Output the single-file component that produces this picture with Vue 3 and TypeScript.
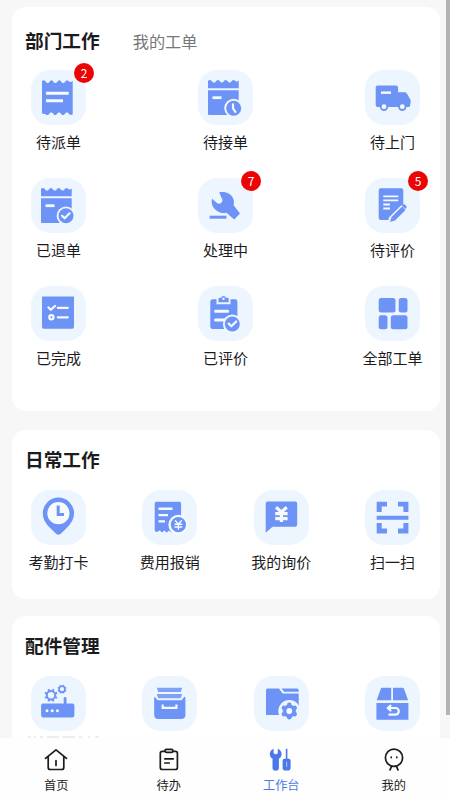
<script setup lang="ts">
interface Entry {
  label: string
  icon: string
  badge?: number
}

const check = '<path class="k" d="m31 37.8 2.6 2.5 5-5"/>'
const slip = (circle: string) =>
  `<path d="M10 18.3v-7.5q1.8-1.6 3.6 0c1.5 2.6 3.4 2.4 4.8 0q1.5-1.7 3 0c1.5 2.4 3.4 2.4 4.8 0q1.5-1.7 3 0c1.5 2.4 3.4 2.4 4.8 0q1.5-1.7 3 0l1.5 1 2.2-1.3v7.8z"/><path d="M10 20.2h30.7V45H11q-1 0-1-1z"/><path class="w" d="M14.5 26.3h9v2.8h-9z"/>${circle}`
const ringed = (x: number, y: number, inner: string) =>
  `<circle class="bg" cx="${x}" cy="${y}" r="9.4"/><circle cx="${x}" cy="${y}" r="7.5"/>${inner}`

function gear(cx: number, cy: number, r: number, teeth: number): string {
  let d = ''
  for (let i = 0; i < teeth; i++) {
    const a = ((i + 0.5) * 2 * Math.PI) / teeth
    const x1 = cx + r * Math.cos(a)
    const y1 = cy + r * Math.sin(a)
    const x2 = cx + r * 1.4 * Math.cos(a)
    const y2 = cy + r * 1.4 * Math.sin(a)
    d += `M${x1.toFixed(2)} ${y1.toFixed(2)}L${x2.toFixed(2)} ${y2.toFixed(2)}`
  }
  return d
}

const icons: Record<string, string> = {
  receipt:
    '<path d="M11 11.2q1.8-1.8 3.4 0c1.5 2.4 3.3 2.4 4.6 0q1.5-1.7 3 0c1.5 2.4 3.4 2.4 4.8 0q1.5-1.7 3 0c1.5 2.4 3.4 2.4 4.8 0q1.5-1.7 3 0 2 1.8 4.1-.4v33.4q-1.8 1.6-3.4 0c-1.5-2.4-3.4-2.4-4.8 0q-1.5 1.7-3 0c-1.5-2.4-3.4-2.4-4.8 0q-1.5 1.7-3 0c-1.5-2.4-3.4-2.4-4.8 0q-1.5 1.7-3 0L11 43.6z"/><path class="w" d="M15 21.8h22.7v3H15zM15 29.2h17v3H15z"/>',
  clock: slip(ringed(35.7, 38.2, '<path class="k" d="M35 34.4v4l2.4 3.4"/>')),
  returned: slip(ringed(35, 37.8, check)),
  truck:
    '<path d="M12.5 15.5h18.4q2.2 0 2.2 2v4.8h6.4q1.7 0 2.5 1.4l3.2 5.5q.7 1.2.5 2.4l-.6 3.8q-.2 1.6-2 1.6H12.6q-1.9 0-1.9-2V17.5q0-2 1.8-2z"/><circle cx="19" cy="36.7" r="4.2"/><circle cx="37.3" cy="36.7" r="4.2"/><circle class="w" cx="19" cy="36.7" r="2.4"/><circle class="w" cx="37.3" cy="36.7" r="2.4"/><path class="w" d="M16 21.4h10v2.5H16z"/>',
  wrench:
    '<path d="M21.2 14.3c6-1.4 12 1.3 14 6.2 1 2.5.9 4.7.4 6.8l6.4 8.2-5.8 5.9-7.7-6.7c-3.5.9-7 0-9.7-2-4.3-3.2-6-7.400-4.700-12l4.900 4.300c1.300 1.100 3.200.900 4.400-.300 1.300-1.300 1.400-3.200.300-4.500z"/><path d="M11.700 37.700H28.500v3H11.700z"/>',
  review:
    '<path d="M15.500 10.300h20.800q2 0 2 2v13.900L23.600 40v2h-7.900q-2 0-2-2V12.300q0-2 1.800-2z"/><path class="w" d="M18.300 17.400h15v1.900h-15zM18.300 21.400h15v1.900h-15zM18.300 25.500H25v1.900h-6.700zM18.300 29.500H25v1.900h-6.700z"/><path class="pengap" d="M39 30 27 42"/><path class="pen" d="M38.800 30.200 28 41"/><path d="m26.400 39.200 3.400 3.400-4.800 1.500z"/><path d="m36.800 27.700 1.200-1.100q.9-.8 1.800 0l1.500 1.500q.8.900 0 1.800l-1.100 1.100z"/>',
  done:
    '<path d="M11 10.400h32v30.400q0 2-2 2H13q-2 0-2-2z"/><path class="k" d="m17.500 21.400 2.300 2.400 4.200-3.800M26.800 21.800h10M26.800 31.300h10"/><circle class="k" cx="20.400" cy="31.300" r="2.100"/>',
  rated:
    '<path d="M14.800 13.300h3.700v5h14v-5H37q2.400 0 2.400 2.400v25q0 2.400-2.400 2.400H14.800q-2.500 0-2.500-2.500V15.800q0-2.500 2.500-2.500z"/><path d="M22 11.800h1.200a2.400 2.400 0 0 1 4.700 0h1.600q1.200 0 1.200 1.200v3.300H20.400v-3.100q0-1.400 1.600-1.400z"/><circle class="bg" cx="25.500" cy="12.800" r="1.200"/><path class="w" d="M17.500 23.800h12.200a1.500 1.500 0 0 1 0 3H17.500a1.500 1.500 0 0 1 0-3zM17.500 32.500h11v3h-11a1.500 1.500 0 0 1 0-3z"/>' +
    ringed(34.3, 38, '<path class="k" d="m30.700 37.600 2.700 2.700 4.800-4.800"/>'),
  grid:
    '<rect x="13.700" y="12" width="16.800" height="14.400" rx="2.500"/><rect x="33.700" y="12" width="8.800" height="14.400" rx="2.500"/><rect x="13.700" y="29.200" width="8.800" height="14" rx="2.500"/><rect x="25.800" y="29.200" width="16.700" height="14" rx="2.500"/>',
  pin:
    '<path d="M27.400 7.600A15.600 15.600 0 0 1 43 23.200c0 7.400-4.600 12-8.800 16.200l-4.800 4.600q-2 1.600-4 0l-4.800-4.600c-4.200-4.200-8.800-8.800-8.800-16.200A15.600 15.600 0 0 1 27.400 7.600z"/><circle class="w" cx="27.400" cy="23.200" r="11.100"/><path class="hands" d="M27.200 15.500v9.100H33"/>',
  expense:
    '<path d="M14.500 11.700h23q1.600 0 1.600 1.600V41l-2.500-.5-2.500 2-2.500-2-2.200 2-2.200-2-2.500 2-2.500-2-2 2-2.500-2-3 1.500q-2 0-2-2V13.300q0-1.600 1.800-1.600z"/><path class="w" d="M16.500 17.600h14v2.300h-14zM16.500 24h9.500v2.300h-9.500zM16.500 30.300h6.500v2.300h-6.500z"/><circle class="w" cx="36.400" cy="34.700" r="10"/><circle cx="36.400" cy="34.700" r="7.600"/><path class="k thin" d="m33.400 30.800 3 3.200 3-3.200M33 34.300h6.800M33 37h6.800M36.400 34v5.300"/>',
  price:
    '<path d="M13.700 11.400H41q2.200 0 2.200 2.200v20.900q0 2.200-2.200 2.200H18.500l-6.800 6V13.600q0-2.200 2-2.200z"/><path class="k yen" d="m22 17.200 5.400 4.800 5.400-4.800M21.200 23.600h12.400M21.200 28.600h12.400M27.400 22v10"/>',
  scan:
    '<path d="M11.700 11.700H22v4.800h-5.300V22h-5zM33 11.700h10.400V22h-5v-5.500H33zM11.700 33h5v5.600H22v4.800H11.700zM38.400 33h5v10.400H33v-4.800h5.400zM11.700 25.700h31.700v4H11.700z"/>',
  router:
    `<path d="M12 27.500h20.700v-5q0-1.400 1.400-1.400t1.400 1.400v5h6q1.900 0 1.900 1.900v9.800q0 2.300-2.300 2.300H12.400q-2.300 0-2.300-2.300v-9.800q0-1.900 1.900-1.900z"/><g class="w"><circle cx="16" cy="34.800" r="1.500"/><circle cx="21.200" cy="34.800" r="1.500"/><circle cx="26.400" cy="34.800" r="1.500"/></g><g class="o"><circle cx="20" cy="19.300" r="4.200"/><path d="${gear(20, 19.3, 4.7, 8)}"/></g><g class="o small"><circle cx="31" cy="13.200" r="2.900"/><path d="${gear(31, 13.2, 3.2, 8)}"/></g>`,
  drawer:
    '<path opacity=".85" d="M14.800 11.700h25.400l-1.400 4.200H16.200zM14.800 18h25.400l-1.400 4.200H16.200z"/><path d="M12.200 21.600q0-1 .8-.6l2.500 3.200h24l2.700-3.200q1-.5 1.200.6v17.500q0 4-4.400 4H16.500q-4.300 0-4.300-4z"/><path class="k square" d="M20.700 28.500v3.300h13.700v-3.300"/>',
  folder:
    `<path d="M13.600 12.600H25l3.500 4.800h16.200V39H12V14.200q0-1.600 1.600-1.600zM27.600 12.600h15.500q1.600 0 1.600 1.600v1.500H30z"/><circle class="bg" cx="35.300" cy="35" r="11"/><circle cx="35.300" cy="35" r="6.600"/><path class="teeth" d="${gear(35.3, 35, 4.4, 6)}"/><circle class="w" cx="35.300" cy="35" r="2.900"/>`,
  parcel:
    '<path d="M17.300 11.700h8.900v12.600H11.700l4-11.300q.4-1.300 1.600-1.300zM28 11.700h9.500q1.200 0 1.600 1.300l4 11.300H28zM11.400 27h32v16.700h-32z"/><path class="k" d="M24.300 38.600h6.200a3.300 3.300 0 0 0 0-6.600H23M25.500 29.700 22.700 32l2.800 2.500"/>',
}

const department: Entry[] = [
  { label: '待派单', icon: 'receipt', badge: 2 },
  { label: '待接单', icon: 'clock' },
  { label: '待上门', icon: 'truck' },
  { label: '已退单', icon: 'returned' },
  { label: '处理中', icon: 'wrench', badge: 7 },
  { label: '待评价', icon: 'review', badge: 5 },
  { label: '已完成', icon: 'done' },
  { label: '已评价', icon: 'rated' },
  { label: '全部工单', icon: 'grid' },
]
const daily: Entry[] = [
  { label: '考勤打卡', icon: 'pin' },
  { label: '费用报销', icon: 'expense' },
  { label: '我的询价', icon: 'price' },
  { label: '扫一扫', icon: 'scan' },
]
const parts: string[] = ['router', 'drawer', 'folder', 'parcel']

const tabs = [
  { label: '首页', icon: '<path d="M1.500 10.300 12 1.800l10.500 8.500M4.200 8.500v11q0 2 2 2h11.600q2 0 2-2v-11M12 12.500v5"/>' },
  { label: '待办', icon: '<path d="M8 3.300H5.300q-2 0-2 2v14.200q0 2 2 2h13.100q2 0 2-2V5.300q0-2-2-2H16M9.500 1.300h5q1.500 0 1.500 1.500t-1.500 1.500h-5Q8 4.300 8 2.800t1.500-1.500zM7.800 10.800h8.500M7.800 15h4.500"/>' },
  { label: '工作台', active: true, icon: '<path class="f" d="M4.600.7v4.500l2.100 1.300 2.100-1.300V.7c2.600 1.200 3.800 3 3.800 5.200 0 2.300-1.200 3.800-2.700 4.700v9a3.200 3.200 0 0 1-6.400 0v-9C2 9.700.8 8.200.8 5.900.8 3.700 2 1.900 4.600.7zM16.800.7h1.600v10.100h1.300q1.900 0 1.900 1.900v7.100q0 2.800-2.800 2.800h-2.400q-2.800 0-2.800-2.800v-7.100q0-1.900 1.900-1.900h1.300z"/><path class="slot" d="M17.600 14v4.500"/>' },
  { label: '我的', icon: '<circle cx="12" cy="9.800" r="8.600"/><path d="M9.500 18.600 8 21.800M14.500 18.600l1.500 3.200M9.200 9.200v.4M14.800 9.200v.4"/>' },
]
</script>

<template>
  <div class="screen">
    <main class="content">
      <section class="card department">
        <header class="head">
          <h2>部门工作</h2>
          <span class="other">我的工单</span>
        </header>
        <div class="grid three">
          <div v-for="e in department" :key="e.label" class="item">
            <div class="tile">
              <svg viewBox="0 0 55 55" v-html="icons[e.icon]"></svg>
              <b v-if="e.badge" class="badge">{{ e.badge }}</b>
            </div>
            <span class="label">{{ e.label }}</span>
          </div>
        </div>
      </section>
      <section class="card daily">
        <header class="head"><h2>日常工作</h2></header>
        <div class="grid four">
          <div v-for="e in daily" :key="e.label" class="item">
            <div class="tile"><svg viewBox="0 0 55 55" v-html="icons[e.icon]"></svg></div>
            <span class="label">{{ e.label }}</span>
          </div>
        </div>
      </section>
      <section class="card parts">
        <header class="head"><h2>配件管理</h2></header>
        <div class="grid four">
          <div v-for="p in parts" :key="p" class="item">
            <div class="tile"><svg viewBox="0 0 55 55" v-html="icons[p]"></svg></div>
          </div>
        </div>
        <svg class="hint" viewBox="0 0 72 2"><path d="M1 1h3m3 0h2m4 0h3m4 0h12m3 0h13m4 0h3m6 0h2m5 0h5" /></svg>
      </section>
    </main>
    <div class="scrollbar"></div>
    <nav class="tabs">
      <div v-for="t in tabs" :key="t.label" class="tab" :class="{ active: t.active }">
        <svg viewBox="0 0 24 24" v-html="t.icon"></svg>
        <span>{{ t.label }}</span>
      </div>
    </nav>
  </div>
</template>

<style>
body {
  margin: 0;
  overflow: hidden;
}
</style>

<style scoped>
.screen {
  position: relative;
  display: flex;
  flex-direction: column;
  width: 450px;
  height: 800px;
  overflow: hidden;
  background: #f7f7f7;
  color: #1c1c1e;
  font-family: "Noto Sans CJK SC", sans-serif;
}
.content {
  flex: 1;
  min-height: 0;
  display: flex;
  flex-direction: column;
  padding: 7px 10px 0 12px;
  overflow: hidden;
}
.card {
  box-sizing: border-box;
  flex: none;
  background: #fff;
  border-radius: 14px;
  padding: 18px 15.5px 0 13px;
}
.department {
  height: 404px;
  margin-bottom: 19px;
}
.daily {
  height: 169px;
  margin-bottom: 17px;
  padding-top: 14px;
}
.parts {
  height: 122px;
  padding-top: 14px;
  border-radius: 14px 14px 0 0;
}
.head {
  display: flex;
  align-items: center;
  height: 30px;
}
h2 {
  margin: 0;
  font-size: 18.7px;
  line-height: 30px;
  font-weight: 700;
}
.other {
  margin: 1px 0 0 33px;
  font-size: 16.2px;
  line-height: 28px;
  color: #777;
}
.grid {
  display: grid;
  justify-content: space-between;
  padding: 15px 0 0 1.5px;
}
.three {
  grid-template-columns: repeat(3, 64px);
}
.four {
  grid-template-columns: repeat(4, 64px);
  padding-top: 16px;
}
.item {
  display: flex;
  flex-direction: column;
  align-items: center;
  height: 108px;
}
.daily .item {
  height: 90px;
}
.parts .item {
  height: 60px;
}
.tile {
  position: relative;
  width: 55px;
  height: 55px;
  border-radius: 19px;
  background: #edf6ff;
}
.tile svg {
  display: block;
  width: 55px;
  height: 55px;
  fill: #6c93f5;
}
.tile :deep(.w) {
  fill: #f6fbff;
}
.tile :deep(.bg) {
  fill: #edf6ff;
}
.tile :deep(.k) {
  fill: none;
  stroke: #f6fbff;
  stroke-width: 2.2;
  stroke-linecap: round;
  stroke-linejoin: round;
}
.tile :deep(.thin) {
  stroke-width: 1.4;
}
.tile :deep(.yen) {
  stroke-width: 3.2;
  stroke-linecap: butt;
}
.tile :deep(.square) {
  stroke-linecap: butt;
  stroke-linejoin: miter;
}
.tile :deep(.hands) {
  fill: none;
  stroke: #6c93f5;
  stroke-width: 3;
}
.tile :deep(.pen) {
  stroke: #6c93f5;
  stroke-width: 4.8;
}
.tile :deep(.pengap) {
  stroke: #edf6ff;
  stroke-width: 8;
}
.tile :deep(.o) {
  fill: none;
  stroke: #6c93f5;
  stroke-width: 2;
}
.tile :deep(.small) {
  stroke-width: 1.6;
}
.tile :deep(.teeth) {
  stroke: #6c93f5;
  stroke-width: 4.6;
  stroke-linecap: round;
}
.label {
  margin-top: 6px;
  font-size: 15px;
  line-height: 22px;
  white-space: nowrap;
}
.badge {
  position: absolute;
  top: -7px;
  right: -8px;
  width: 20px;
  height: 20px;
  border-radius: 50%;
  background: #eb0505;
  color: #fff;
  font-size: 12px;
  line-height: 20px;
  font-weight: 400;
  text-align: center;
}
.hint {
  display: block;
  width: 72px;
  height: 2px;
  margin: 0 0 0 2px;
  stroke: #ddd;
  stroke-width: 1;
}
.scrollbar {
  position: absolute;
  top: 0;
  right: 0;
  width: 4px;
  height: 715px;
  background: #b4b4b4;
}
.tabs {
  flex: none;
  display: grid;
  grid-template-columns: repeat(4, 1fr);
  height: 62px;
  background: #fefefe;
}
.tab {
  display: flex;
  flex-direction: column;
  align-items: center;
  padding-top: 10px;
  font-size: 12.2px;
  line-height: 18px;
}
.tab svg {
  width: 24px;
  height: 24px;
  margin-bottom: 4px;
  fill: none;
  stroke: #1c1c1e;
  stroke-width: 1.7;
  stroke-linecap: round;
  stroke-linejoin: round;
}
.tab.active {
  color: #4a78ea;
}
.tab :deep(.f) {
  fill: #4a78ea;
  stroke: none;
}
.tab :deep(.slot) {
  stroke: #9db8f7;
  stroke-width: 1.2;
}
</style>
